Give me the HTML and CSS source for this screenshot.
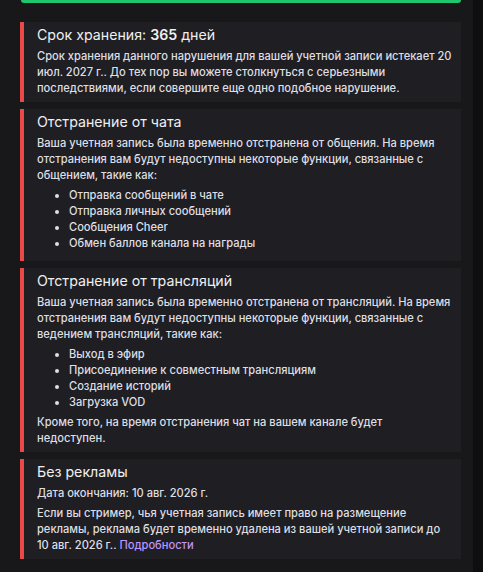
FILE: index.html
```html
<!DOCTYPE html>
<html lang="ru">
<head>
  <meta charset="UTF-8">
  <meta name="viewport" content="width=device-width, initial-scale=1.0">
  <title>Нарушение</title>
  <link rel="stylesheet" href="styles.css">
</head>
<body>
  <div class="panel">
    <div class="status-bar"></div>

    <div class="notice">
      <h3>Срок хранения: <b>365</b> дней</h3>
      <p>Срок хранения данного нарушения для вашей учетной записи истекает 20 июл. 2027 г.. До тех пор вы можете столкнуться с серьезными последствиями, если совершите еще одно подобное нарушение.</p>
    </div>

    <div class="notice">
      <h3>Отстранение от чата</h3>
      <p>Ваша учетная запись была временно отстранена от общения. На время отстранения вам будут недоступны некоторые функции, связанные с общением, такие как:</p>
      <ul>
        <li>Отправка сообщений в чате</li>
        <li>Отправка личных сообщений</li>
        <li>Сообщения Cheer</li>
        <li>Обмен баллов канала на награды</li>
      </ul>
    </div>

    <div class="notice">
      <h3>Отстранение от трансляций</h3>
      <p>Ваша учетная запись была временно отстранена от трансляций. На время отстранения вам будут недоступны некоторые функции, связанные с ведением трансляций, такие как:</p>
      <ul>
        <li>Выход в эфир</li>
        <li>Присоединение к совместным трансляциям</li>
        <li>Создание историй</li>
        <li>Загрузка VOD</li>
      </ul>
      <p>Кроме того, на время отстранения чат на вашем канале будет недоступен.</p>
    </div>

    <div class="notice">
      <h3>Без рекламы</h3>
      <p class="date">Дата окончания: 10 авг. 2026 г.</p>
      <p>Если вы стример, чья учетная запись имеет право на размещение рекламы, реклама будет временно удалена из вашей учетной записи до 10 авг. 2026 г.. <a href="#">Подробности</a></p>
    </div>
  </div>
</body>
</html>
```

FILE: styles.css
```css
body {
  margin: 0;
  background-color: #0e0e10;
  font-family: 'Inter', 'Noto Sans', sans-serif;
  color: #dedee3;
}

.panel {
  width: 473px;
  min-height: 572px;
  box-sizing: border-box;
  padding: 0 12px 0 20px;
  background-color: #18181b;
  display: flex;
  flex-direction: column;
  gap: 7px;
}

.status-bar {
  height: 3px;
  margin: 0 0 12px 1px;
  background-color: #1fc66d;
  border-radius: 0 0 4px 4px;
}

.notice {
  background-color: #1f1f23;
  border-left: 4px solid #eb4848;
  padding: 3px 9px 6px 13px;
}

.notice h3 {
  margin: 0 0 3px;
  font-size: 14.2px;
  line-height: 20px;
  font-weight: 400;
  color: #efeff1;
}

.notice h3 b {
  font-weight: 600;
}

.notice p {
  margin: 0;
  font-size: 11.12px;
  line-height: 16px;
  font-weight: 500;
}

.notice p + p {
  margin-top: 4px;
}

.notice ul {
  margin: 4px 0;
  padding-left: 32px;
  font-size: 11.12px;
  line-height: 16px;
  font-weight: 500;
}

.notice a {
  color: #bf94ff;
  text-decoration: none;
}
```
